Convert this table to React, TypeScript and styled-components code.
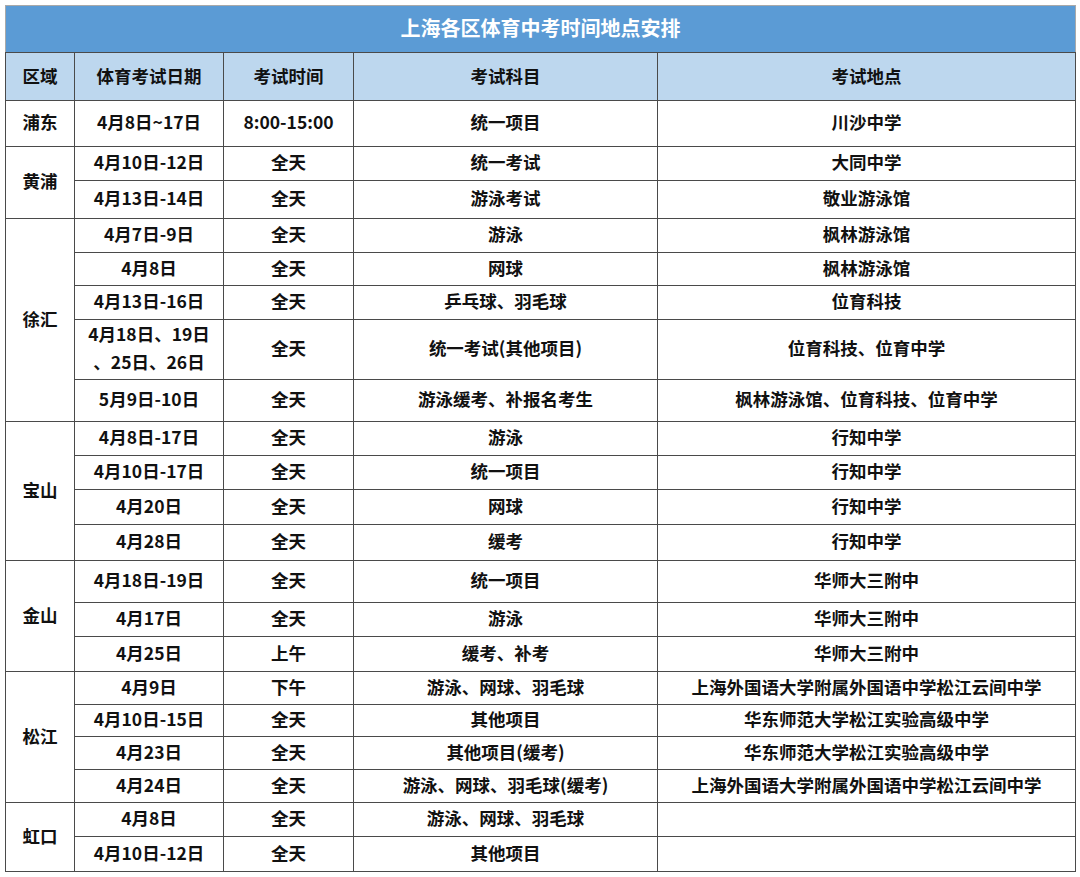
import React from "react";
import styled, { createGlobalStyle } from "styled-components";

const GlobalStyle = createGlobalStyle`
  html, body {
    margin: 0;
    padding: 0;
    background: #ffffff;
  }
  body {
    font-family: "Noto Sans CJK SC", "Noto Sans", sans-serif;
  }
`;

type Row = { date: string; time: string; subject: string; place: string; h: number };
type Region = { name: string; rows: Row[] };

const regions: Region[] = [
  {
    name: "浦东",
    rows: [{ date: "4月8日~17日", time: "8:00-15:00", subject: "统一项目", place: "川沙中学", h: 46 }],
  },
  {
    name: "黄浦",
    rows: [
      { date: "4月10日-12日", time: "全天", subject: "统一考试", place: "大同中学", h: 34 },
      { date: "4月13日-14日", time: "全天", subject: "游泳考试", place: "敬业游泳馆", h: 38 },
    ],
  },
  {
    name: "徐汇",
    rows: [
      { date: "4月7日-9日", time: "全天", subject: "游泳", place: "枫林游泳馆", h: 34 },
      { date: "4月8日", time: "全天", subject: "网球", place: "枫林游泳馆", h: 33 },
      { date: "4月13日-16日", time: "全天", subject: "乒乓球、羽毛球", place: "位育科技", h: 34 },
      { date: "4月18日、19日\n、25日、26日", time: "全天", subject: "统一考试(其他项目)", place: "位育科技、位育中学", h: 60 },
      { date: "5月9日-10日", time: "全天", subject: "游泳缓考、补报名考生", place: "枫林游泳馆、位育科技、位育中学", h: 42 },
    ],
  },
  {
    name: "宝山",
    rows: [
      { date: "4月8日-17日", time: "全天", subject: "游泳", place: "行知中学", h: 34 },
      { date: "4月10日-17日", time: "全天", subject: "统一项目", place: "行知中学", h: 34 },
      { date: "4月20日", time: "全天", subject: "网球", place: "行知中学", h: 35 },
      { date: "4月28日", time: "全天", subject: "缓考", place: "行知中学", h: 36 },
    ],
  },
  {
    name: "金山",
    rows: [
      { date: "4月18日-19日", time: "全天", subject: "统一项目", place: "华师大三附中", h: 42 },
      { date: "4月17日", time: "全天", subject: "游泳", place: "华师大三附中", h: 34 },
      { date: "4月25日", time: "上午", subject: "缓考、补考", place: "华师大三附中", h: 35 },
    ],
  },
  {
    name: "松江",
    rows: [
      { date: "4月9日", time: "下午", subject: "游泳、网球、羽毛球", place: "上海外国语大学附属外国语中学松江云间中学", h: 33 },
      { date: "4月10日-15日", time: "全天", subject: "其他项目", place: "华东师范大学松江实验高级中学", h: 32 },
      { date: "4月23日", time: "全天", subject: "其他项目(缓考)", place: "华东师范大学松江实验高级中学", h: 33 },
      { date: "4月24日", time: "全天", subject: "游泳、网球、羽毛球(缓考)", place: "上海外国语大学附属外国语中学松江云间中学", h: 33 },
    ],
  },
  {
    name: "虹口",
    rows: [
      { date: "4月8日", time: "全天", subject: "游泳、网球、羽毛球", place: "", h: 34 },
      { date: "4月10日-12日", time: "全天", subject: "其他项目", place: "", h: 35 },
    ],
  },
];

const Page = styled.div`
  padding: 5px;
`;

const Table = styled.table`
  width: 1070px;
  border-collapse: collapse;
  table-layout: fixed;
  border: 1px solid #a9a9a9;
  color: #111111;
`;

const TitleCell = styled.th`
  height: 47px;
  box-sizing: border-box;
  background: #5b9bd5;
  color: #ffffff;
  font-size: 20px;
  font-weight: 700;
  text-align: center;
  border-bottom: 1px solid #4a4a4a;
  padding: 0 0 4px;
`;

const HeadCell = styled.th`
  height: 48px;
  box-sizing: border-box;
  background: #bdd7ee;
  font-size: 17.5px;
  font-weight: 700;
  text-align: center;
  border: 1px solid #4a4a4a;
  padding: 0 0 2px;
`;

const Cell = styled.td<{ $h?: number }>`
  height: ${(p) => (p.$h ? `${p.$h}px` : "auto")};
  box-sizing: border-box;
  font-size: 17.5px;
  font-weight: 700;
  text-align: center;
  vertical-align: middle;
  border: 1px solid #4a4a4a;
  padding: 0 0 3px;
  line-height: 28px;
  white-space: pre-line;
`;

const widths = [69, 149, 130, 304, 418];

export default function App() {
  return (
    <>
      <GlobalStyle />
      <Page>
        <Table>
          <colgroup>
            {widths.map((w, i) => (
              <col key={i} style={{ width: w }} />
            ))}
          </colgroup>
          <thead>
            <tr>
              <TitleCell colSpan={5}>上海各区体育中考时间地点安排</TitleCell>
            </tr>
            <tr>
              <HeadCell>区域</HeadCell>
              <HeadCell>体育考试日期</HeadCell>
              <HeadCell>考试时间</HeadCell>
              <HeadCell>考试科目</HeadCell>
              <HeadCell>考试地点</HeadCell>
            </tr>
          </thead>
          <tbody>
            {regions.map((r) =>
              r.rows.map((row, i) => (
                <tr key={r.name + i}>
                  {i === 0 && <Cell rowSpan={r.rows.length}>{r.name}</Cell>}
                  <Cell $h={row.h}>{row.date}</Cell>
                  <Cell>{row.time}</Cell>
                  <Cell>{row.subject}</Cell>
                  <Cell>{row.place}</Cell>
                </tr>
              ))
            )}
          </tbody>
        </Table>
      </Page>
    </>
  );
}
